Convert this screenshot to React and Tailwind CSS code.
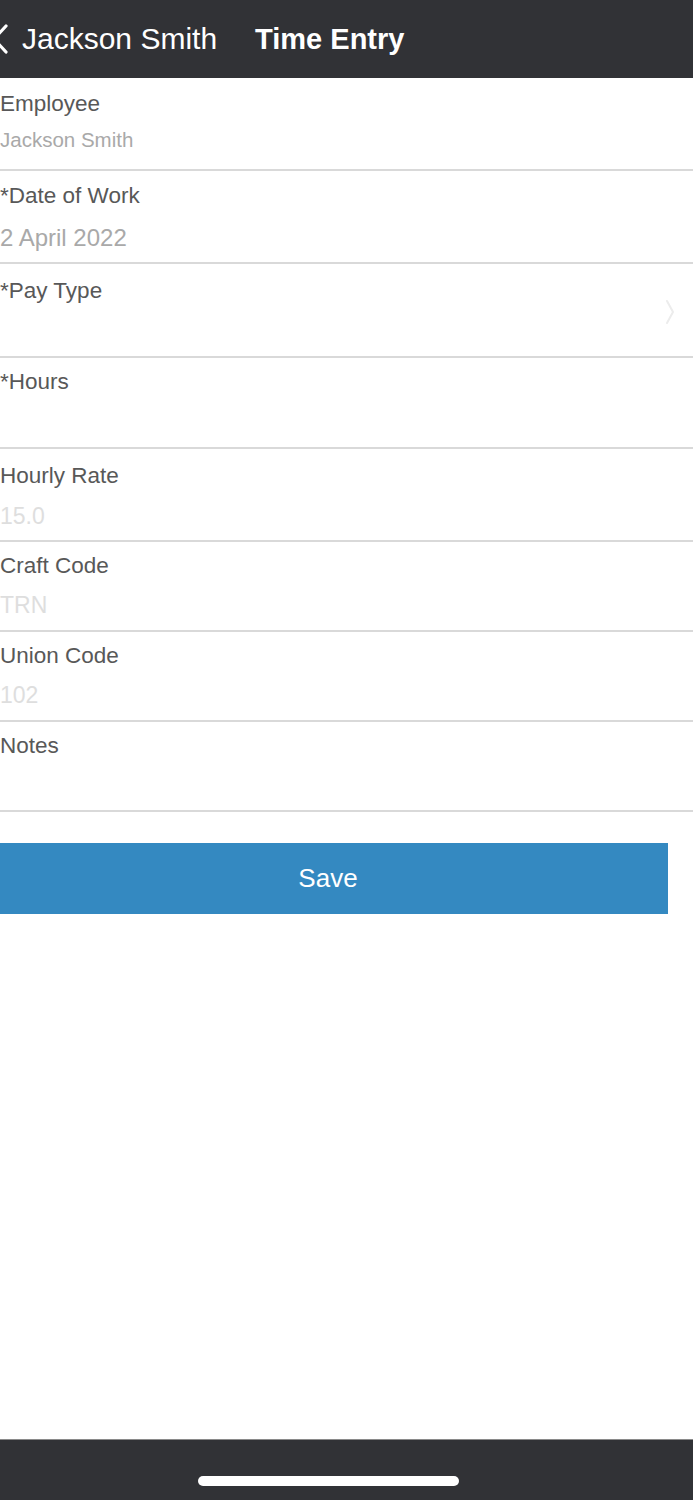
import React from "react";

const rows = [
  { label: "Employee", lt: "mt-[15px]", value: "Jackson Smith", h: 93, vc: "text-[#a9a9a9]", vs: "text-[20.5px]", vt: "mt-[14px]" },
  { label: "*Date of Work", lt: "mt-[14px]", value: "2 April 2022", h: 93, vc: "text-[#a9a9a9]", vs: "text-[24px]", vt: "mt-[18px]" },
  { label: "*Pay Type", lt: "mt-[16px]", value: "", h: 94, chevron: true },
  { label: "*Hours", lt: "mt-[13px]", value: "", h: 91 },
  { label: "Hourly Rate", lt: "mt-[16px]", value: "15.0", h: 93, vc: "text-[#dedede]", vs: "text-[23px]", vt: "mt-[17px]" },
  { label: "Craft Code", lt: "mt-[13px]", value: "TRN", h: 90, vc: "text-[#dedede]", vs: "text-[23px]", vt: "mt-[16px]" },
  { label: "Union Code", lt: "mt-[13px]", value: "102", h: 90, vc: "text-[#dedede]", vs: "text-[23px]", vt: "mt-[16px]" },
  { label: "Notes", lt: "mt-[13px]", value: "", h: 90 },
];

export default function App() {
  return (
    <div className="h-[1500px] w-[693px] flex flex-col bg-white" style={{ fontFamily: '"Liberation Sans", Arial, sans-serif' }}>
      <div className="h-[78px] bg-[#313236] flex items-center text-white shrink-0">
        <svg width="8" height="30" viewBox="0 0 8 30" className="shrink-0">
          <path d="M6 2 L-6 15 L6 28" fill="none" stroke="white" strokeWidth="3.2" strokeLinecap="round" strokeLinejoin="round" />
        </svg>
        <span className="ml-[14px] text-[30px] leading-none">Jackson Smith</span>
        <span className="ml-[38px] text-[29px] font-bold leading-none">Time Entry</span>
      </div>
      {rows.map((r, i) => (
        <div
          key={i}
          className="relative flex flex-col border-b-2 border-[#d9d9d9] shrink-0"
          style={{ height: r.h }}
        >
          <div className={`text-[22.5px] leading-none text-[#585858] ${r.lt}`}>{r.label}</div>
          {r.value && <div className={`${r.vs} ${r.vc} ${r.vt} leading-none`}>{r.value}</div>}
          {r.chevron && (
            <svg width="10" height="26" viewBox="0 0 10 26" className="absolute right-[18px] top-[35px]">
              <path d="M2 2 L8 13 L2 24" fill="none" stroke="#ececec" strokeWidth="2" strokeLinecap="round" strokeLinejoin="round" />
            </svg>
          )}
        </div>
      ))}
      <div className="mt-[31px] w-[668px] h-[71px] bg-[#3489c1] flex items-center justify-center pr-[12px] text-white text-[26px] shrink-0">
        Save
      </div>
      <div className="flex-1" />
      <div className="h-[61px] bg-[#313236] border-t border-[#8a8a8a] flex shrink-0">
        <div className="mt-[36px] ml-[198px] w-[261px] h-[10px] rounded-full bg-white" />
      </div>
    </div>
  );
}
